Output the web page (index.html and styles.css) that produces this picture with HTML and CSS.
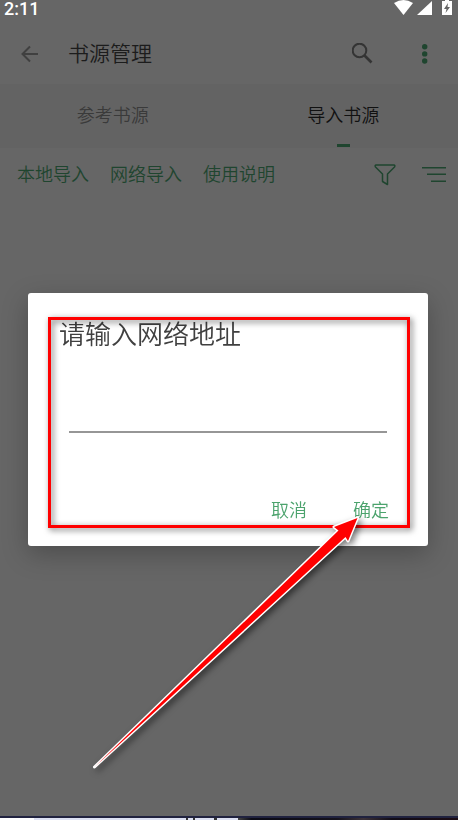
FILE: index.html
```html
<!DOCTYPE html>
<html lang="zh-CN">
<head>
    <meta charset="UTF-8">
    <meta name="viewport" content="width=device-width, initial-scale=1.0">
    <title>书源管理</title>
    <link rel="stylesheet" href="styles.css">
</head>
<body>
    <div class="screen">
        <!-- Status bar -->
        <div class="status-bar">
            <span class="clock">2:11</span>
            <svg class="status-icons" width="58" height="16" viewBox="0 0 58 16" fill="#fff">
                <path d="M0 3Q9.500 -3 19 3L9.500 15Z"/>
                <path d="M38 1V15H23Z"/>
                <path d="M48 1H51V0H55V1H58V15H48Z"/>
                <path d="M54 3L50 9H52.500L51.500 13L56 7H53.500Z" fill="#666"/>
            </svg>
        </div>

        <!-- Title bar -->
        <header class="app-bar">
            <button class="icon-btn" aria-label="返回">
                <svg width="18" height="18" viewBox="0 0 18 18" fill="none" stroke="#404040" stroke-width="2">
                    <path d="M18 9H3M10 1.500L2.500 9L10 16.500"/>
                </svg>
            </button>
            <h1>书源管理</h1>
            <button class="icon-btn" aria-label="搜索">
                <svg width="22" height="22" viewBox="0 0 22 22" fill="none" stroke="#343434" stroke-width="2">
                    <circle cx="7.500" cy="7.500" r="6.800"/>
                    <path d="M12.500 12.500L19.500 19.500" stroke-width="2.600"/>
                </svg>
            </button>
            <button class="icon-btn more" aria-label="更多">
                <svg width="6" height="20" viewBox="0 0 6 20" fill="#1f452f">
                    <circle cx="2.700" cy="2.700" r="2.700"/>
                    <circle cx="2.700" cy="9.900" r="2.700"/>
                    <circle cx="2.700" cy="17" r="2.700"/>
                </svg>
            </button>
        </header>

        <!-- Tabs -->
        <nav class="tabs">
            <button class="tab">参考书源</button>
            <button class="tab active">导入书源</button>
        </nav>

        <!-- Import actions -->
        <div class="toolbar">
            <button class="action">本地导入</button>
            <button class="action">网络导入</button>
            <button class="action">使用说明</button>
            <button class="icon-btn filter" aria-label="筛选">
                <svg width="22" height="22" viewBox="0 0 22 22" fill="none" stroke="#1f452f" stroke-width="1.500" stroke-linejoin="round">
                    <path d="M2 1H20Q21.500 1.500 20.500 3L13.500 10V20.500L8.500 17.500V10L1.500 3Q0.500 1.500 2 1Z"/>
                </svg>
            </button>
            <button class="icon-btn" aria-label="排序">
                <svg width="24" height="16" viewBox="0 0 24 16" fill="none" stroke="#1f452f" stroke-width="1.600">
                    <path d="M0 0.800H24M5 7.200H24M9 14.200H24"/>
                </svg>
            </button>
        </div>
    </div>

    <div class="overlay">
        <form class="dialog" role="dialog" aria-labelledby="dialog-title">
            <label class="dialog-title" id="dialog-title" for="address">请输入网络地址</label>
            <input class="address" id="address" type="text" autocomplete="off">
            <div class="dialog-buttons">
                <button type="button" class="dialog-btn">取消</button>
                <button type="button" class="dialog-btn">确定</button>
            </div>
            <div class="highlight"></div>
            <svg class="arrow" width="280" height="270" viewBox="0 0 280 270">
                <path d="M4.500 252L248.500 15.500L244 12L267.500 3L258 26L255.500 22Z" fill="#f00" stroke="#fff" stroke-width="3" stroke-linejoin="round" paint-order="stroke"/>
            </svg>
        </form>
    </div>

    <!-- Edge of the desktop under the phone screen -->
    <footer class="desktop-edge">
        <span class="edge-blank"></span>
        <span class="edge-window"></span>
        <span class="edge-photo"></span>
    </footer>
</body>
</html>
```
FILE: styles.css
```css
* {
    box-sizing: border-box;
}

body {
    margin: 0;
    min-height: 100vh;
    display: flex;
    flex-direction: column;
    background: #666;
    font-family: Roboto, "Noto Sans CJK SC", sans-serif;
    font-weight: 350;
}

button {
    padding: 0;
    border: none;
    background: none;
    color: inherit;
    font: inherit;
    cursor: pointer;
}

svg {
    display: block;
}

.screen {
    flex: 1;
}

.status-bar {
    display: flex;
    justify-content: space-between;
    height: 24px;
    padding: 0 6px 0 4px;
    color: #fff;
}

.clock {
    font-size: 18px;
    line-height: 18px;
    font-weight: 500;
}

.app-bar {
    display: flex;
    align-items: center;
    height: 60px;
    padding: 0 30px 0 20px;
}

.app-bar h1 {
    flex: 1;
    margin: 0 0 0 30px;
    color: #1c1c1c;
    font-size: 21px;
    line-height: 30px;
    font-weight: 350;
}

.more {
    margin-left: 48px;
}

.tabs {
    display: flex;
    height: 64px;
    padding-right: 2px;
    background: #636363;
}

.tab {
    position: relative;
    flex: 1;
    color: #3a3a3a;
    font-size: 18px;
    line-height: 26px;
}

.tab:first-child {
    padding-right: 5px;
}

.tab.active {
    color: #111;
}

.tab.active::after {
    content: "";
    position: absolute;
    left: 50%;
    bottom: 1px;
    width: 13px;
    height: 3px;
    margin-left: -6px;
    background: #1f452f;
}

.toolbar {
    display: flex;
    align-items: center;
    gap: 21px;
    height: 54px;
    padding: 0 12px 0 17px;
    color: #1f452f;
}

.action {
    font-size: 18px;
    line-height: 26px;
}

.filter {
    margin-left: auto;
    margin-right: 5px;
}

/* Dialog */
.overlay {
    position: fixed;
    inset: 0 0 -19px;
    display: flex;
    align-items: center;
    justify-content: center;
    padding: 0 30px 0 28px;
}

.dialog {
    position: relative;
    flex: 1;
    display: flex;
    flex-direction: column;
    padding: 23px 39px 22px 31px;
    border-radius: 3px;
    background: #fff;
    box-shadow: 0 8px 26px rgba(0, 0, 0, 0.25);
}

.dialog-title {
    color: #404040;
    font-size: 26px;
    line-height: 38px;
}

.address {
    height: 79px;
    margin: 0 2px 0 10px;
    padding: 30px 4px 4px;
    border: none;
    border-bottom: 2px solid #969696;
    outline: none;
    background: transparent;
    font-size: 20px;
}

.dialog-buttons {
    display: flex;
    justify-content: flex-end;
    gap: 46px;
    margin-top: 65px;
}

.dialog-btn {
    color: #4ca36d;
    font-size: 18px;
    line-height: 26px;
}

/* Red box and arrow drawn over the dialog */
.highlight {
    position: absolute;
    inset: 24px 18px 18px 20px;
    border: 3px solid #f00;
    filter: drop-shadow(2px 2px 3px rgba(0, 0, 0, 0.6));
    pointer-events: none;
}

.arrow {
    position: absolute;
    top: 222px;
    right: 58px;
    overflow: visible;
    filter: drop-shadow(3px 3px 3px rgba(0, 0, 0, 0.5));
    pointer-events: none;
}

.desktop-edge {
    display: flex;
    height: 4px;
    border-top: 2px solid #20223f;
}

.edge-blank {
    width: 34px;
    background: #fff;
}

.edge-window {
    width: 204px;
    background: linear-gradient(to right, transparent 152px, #333 152px, #333 154px, transparent 154px, transparent 159px, #333 159px, #333 161px, transparent 161px, transparent 180px, #333 180px, #333 183px, transparent 183px) #dde1f3;
}

.edge-photo {
    flex: 1;
    background: linear-gradient(to right, #444, #0b0b16 6%, #15121c 45%, #3c3238 57%, #120d18 70%, #1c0c14);
}
```
